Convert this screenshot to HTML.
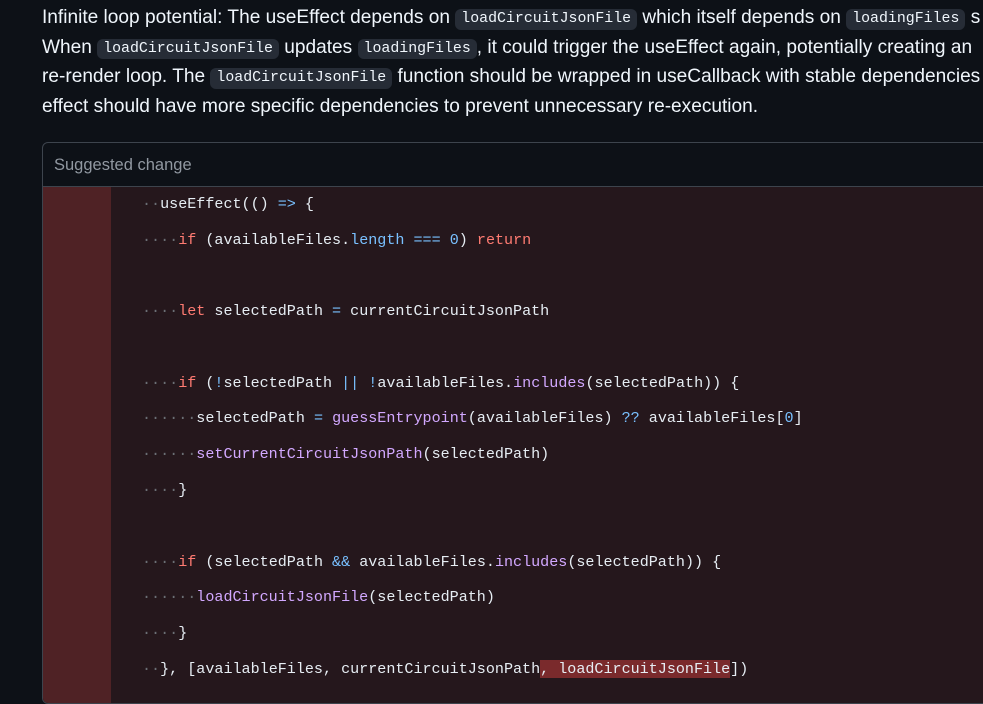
<!DOCTYPE html>
<html><head><meta charset="utf-8"><style>
body{margin:0;background:#0d1117;width:983px;height:690px;overflow:hidden;position:relative;font-family:"Liberation Sans",sans-serif;}
.p{position:absolute;left:42px;top:3px;color:#f0f6fc;font-size:19.1px;white-space:nowrap;}
.p div{height:29.5px;line-height:29.5px;overflow:visible;}
.ic{font-family:"Liberation Mono",monospace;font-size:14.9px;line-height:1;background:#262c36;border-radius:6px;padding:3px 6px;display:inline-block;vertical-align:1px;}
.box{position:absolute;left:42px;top:142px;width:960px;height:560px;border:1px solid #3d444d;border-radius:6px;background:#0d1117;overflow:hidden;}
.hd{height:43px;border-bottom:1px solid #3d444d;color:#9198a1;font-size:16.5px;line-height:44px;padding-left:11px;}
.code{position:absolute;top:44px;left:0;right:0;bottom:0;background:#25171c;}
.gut{position:absolute;left:0;top:0;width:68px;bottom:0;background:#4f2225;}
.ln{position:absolute;left:99px;font-family:"Liberation Mono",monospace;font-size:15.08px;color:#e6edf3;white-space:pre;height:20px;line-height:20px;}
.d{color:#6b6f75}.k{color:#ff7b72}.b{color:#79c0ff}.f{color:#d2a8ff}
.hl{background:#7a2a2c;}
</style></head><body>
<div class="p">
<div>Infinite loop potential: The useEffect depends on <span class="ic">loadCircuitJsonFile</span> which itself depends on <span class="ic">loadingFiles</span> s</div>
<div>When <span class="ic">loadCircuitJsonFile</span> updates <span class="ic">loadingFiles</span>, it could trigger the useEffect again, potentially creating an</div>
<div>re-render loop. The <span class="ic">loadCircuitJsonFile</span> function should be wrapped in useCallback with stable dependencies</div>
<div>effect should have more specific dependencies to prevent unnecessary re-execution.</div>
</div>
<div class="box"><div class="hd">Suggested change</div>
<div class="code"><div class="gut"></div>
<div class="ln" style="top:7px"><span class="d">··</span>useEffect(() <span class="b">=&gt;</span> {</div>
<div class="ln" style="top:43px"><span class="d">····</span><span class="k">if</span> (availableFiles.<span class="b">length</span> <span class="b">===</span> <span class="b">0</span>) <span class="k">return</span></div>
<div class="ln" style="top:114px"><span class="d">····</span><span class="k">let</span> selectedPath <span class="b">=</span> currentCircuitJsonPath</div>
<div class="ln" style="top:186px"><span class="d">····</span><span class="k">if</span> (<span class="b">!</span>selectedPath <span class="b">||</span> <span class="b">!</span>availableFiles.<span class="f">includes</span>(selectedPath)) {</div>
<div class="ln" style="top:221px"><span class="d">······</span>selectedPath <span class="b">=</span> <span class="f">guessEntrypoint</span>(availableFiles) <span class="b">??</span> availableFiles[<span class="b">0</span>]</div>
<div class="ln" style="top:257px"><span class="d">······</span><span class="f">setCurrentCircuitJsonPath</span>(selectedPath)</div>
<div class="ln" style="top:293px"><span class="d">····</span>}</div>
<div class="ln" style="top:365px"><span class="d">····</span><span class="k">if</span> (selectedPath <span class="b">&amp;&amp;</span> availableFiles.<span class="f">includes</span>(selectedPath)) {</div>
<div class="ln" style="top:400px"><span class="d">······</span><span class="f">loadCircuitJsonFile</span>(selectedPath)</div>
<div class="ln" style="top:436px"><span class="d">····</span>}</div>
<div class="ln" style="top:472px"><span class="d">··</span>}, [availableFiles, currentCircuitJsonPath<span class="hl">, loadCircuitJsonFile</span>])</div>
</div></div>
</body></html>
